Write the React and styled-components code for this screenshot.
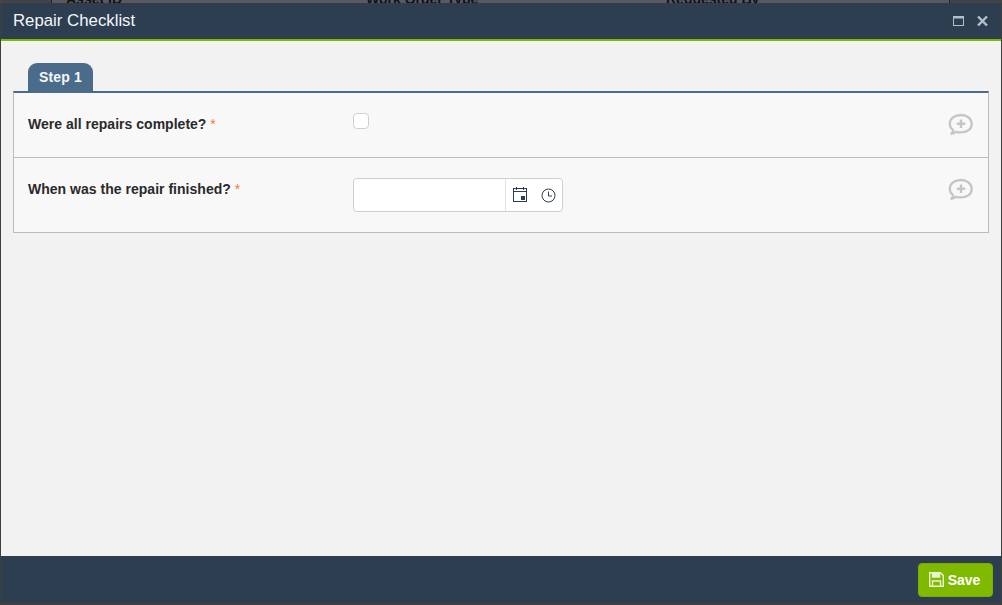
import styled, { createGlobalStyle } from 'styled-components'

const GlobalStyle = createGlobalStyle`
  html, body {
    margin: 0;
    padding: 0;
    height: 100%;
    background: #3a3a3a;
    font-family: "Liberation Sans", Arial, sans-serif;
  }
`
const Page = styled.div`
  position: relative;
  width: 1002px;
  height: 605px;
  overflow: hidden;
  background: #3f3f3f;
`
const BehindRow = styled.div`
  display: flex;
  height: 3px;
  overflow: hidden;
  align-items: flex-end;
  color: #111;
  font-size: 14px;
  font-weight: bold;
  line-height: 7px;
`
const BehindGutter = styled.div`
  width: ${(p) => p.$width}px;
  flex: none;
  height: 3px;
  background: #444;
`
const BehindTable = styled.div`
  width: 899px;
  flex: none;
  display: flex;
  align-items: flex-end;
  height: 3px;
  box-sizing: border-box;
  border-left: 1px solid #222;
  border-right: 1px solid #222;
  background: #5a5a5a;
`
const BehindCell = styled.span`
  width: ${(p) => p.$width}px;
  flex: none;
  padding-left: ${(p) => p.$pad || 0}px;
  box-sizing: border-box;
  white-space: nowrap;
`
const Modal = styled.div`
  position: absolute;
  left: 1px;
  top: 3px;
  width: 1000px;
  height: 600px;
  display: flex;
  flex-direction: column;
  background: #f2f2f2;
`
const TitleBar = styled.div`
  height: 36px;
  flex: none;
  display: flex;
  align-items: center;
  justify-content: space-between;
  padding: 0 13px 0 12px;
  background: #2c3e50;
  border-bottom: 2px solid #7fba00;
`
const Title = styled.h1`
  margin: 0;
  color: #f4f7f9;
  font-size: 16.8px;
  font-weight: normal;
`
const WindowButtons = styled.div`
  display: flex;
  align-items: center;
  gap: 13px;
  color: #b4bfc9;
`
const Content = styled.div`
  flex: 1;
  padding: 22px 12px 0;
`
const Tab = styled.div`
  display: inline-block;
  margin-left: 15px;
  height: 28px;
  line-height: 29px;
  width: 65px;
  text-align: center;
  box-sizing: border-box;
  border-radius: 9px 9px 0 0;
  background: #4a6b8a;
  color: #f5f7f9;
  font-size: 14px;
  font-weight: bold;
  letter-spacing: 0.2px;
  vertical-align: top;
`
const Panel = styled.div`
  width: 976px;
  box-sizing: border-box;
  border: 1px solid #bcbcbc;
  border-top: 2px solid #4a6b8a;
  background: #f8f8f8;
`
const Row = styled.div`
  display: flex;
  height: ${(p) => p.$height}px;
  box-sizing: border-box;
  padding: ${(p) => p.$top}px 14px 0 14px;
  & + & {
    border-top: 1px solid #bcbcbc;
  }
`
const Label = styled.label`
  width: 325px;
  flex: none;
  padding-top: ${(p) => p.$offset}px;
  color: #2a2a2a;
  font-size: 14px;
  font-weight: bold;
  line-height: 16px;
  letter-spacing: 0.02px;
`
const Required = styled.span`
  color: #f47b30;
  font-weight: normal;
`
const Field = styled.div`
  flex: 1;
`
const Checkbox = styled.span`
  display: block;
  width: 16px;
  height: 16px;
  margin-top: 2px;
  box-sizing: border-box;
  border: 1px solid #cfcfcf;
  border-radius: 4px;
  background: #fff;
`
const DateTime = styled.div`
  display: flex;
  width: 210px;
  height: 34px;
  box-sizing: border-box;
  border: 1px solid #cfcfcf;
  border-radius: 4px;
  background: #fff;
`
const DateInput = styled.input`
  width: 152px;
  flex: none;
  box-sizing: border-box;
  border: 0;
  border-right: 1px solid #e2e2e2;
  border-radius: 4px 0 0 4px;
  background: transparent;
  outline: none;
`
const PickerIcons = styled.div`
  flex: 1;
  display: flex;
  align-items: center;
  gap: 13px;
  padding-left: 7px;
`
const CommentButton = styled.div`
  flex: none;
  width: 26px;
  height: 22px;
  margin-top: ${(p) => p.$top}px;
  color: #c4c6c6;
`
const Footer = styled.div`
  height: 47px;
  flex: none;
  display: flex;
  align-items: center;
  justify-content: flex-end;
  padding-right: 8px;
  background: #2c3e50;
`
const SaveButton = styled.button`
  display: flex;
  align-items: center;
  justify-content: center;
  gap: 4px;
  width: 75px;
  height: 34px;
  padding: 0 2px 0 0;
  border: 1px solid #7aae00;
  border-radius: 4px;
  background: #7fba00;
  color: #fff;
  font-family: inherit;
  font-size: 14px;
  font-weight: bold;
`

const CommentIcon = () => (
  <svg width="26" height="22" viewBox="0 0 26 22" fill="none" stroke="currentColor">
    <path d="M3.500 20.800c1.800-.2 3.400-.9 4.500-2 1.200.4 2.800.6 4.500.6 6.800 0 11.200-3.400 11.200-8.500S19.300 2 13 2 1.800 5.500 1.800 10.900c0 2.600 1.100 4.600 3.300 6-.1 1.500-.6 2.800-1.600 3.900z" strokeWidth="2.300" strokeLinejoin="round" />
    <path d="M13 6.500v8.500M8.800 10.800h8.400" strokeWidth="2.400" />
  </svg>
)

const App = () => (
  <Page>
    <GlobalStyle />
    <BehindRow>
      <BehindGutter $width={51} />
      <BehindTable>
        <BehindCell $width={314} $pad={14}>Asset ID</BehindCell>
        <BehindCell $width={300}>Work Order Type</BehindCell>
        <BehindCell $width={280}>Requested By</BehindCell>
      </BehindTable>
      <BehindGutter $width={52} />
    </BehindRow>
    <Modal>
      <TitleBar>
        <Title>Repair Checklist</Title>
        <WindowButtons>
          <svg width="11" height="10" viewBox="0 0 11 10" fill="none" stroke="currentColor">
            <rect x="0.500" y="0.500" width="10" height="9" />
            <path d="M0 1.500h11" strokeWidth="2" />
          </svg>
          <svg width="11" height="10" viewBox="0 0 11 10" fill="none" stroke="currentColor" strokeWidth="2.400">
            <path d="M1 0.500l9 9M10 0.500l-9 9" />
          </svg>
        </WindowButtons>
      </TitleBar>
      <Content>
        <Tab>Step 1</Tab>
        <Panel>
          <Row $height={64} $top={18}>
            <Label $offset={5}>Were all repairs complete? <Required>*</Required></Label>
            <Field><Checkbox /></Field>
            <CommentButton $top={2}><CommentIcon /></CommentButton>
          </Row>
          <Row $height={75} $top={20}>
            <Label $offset={3}>When was the repair finished? <Required>*</Required></Label>
            <Field>
              <DateTime>
                <DateInput type="text" />
                <PickerIcons>
                  <svg width="15" height="16" viewBox="0 0 15 16" fill="none" stroke="#2c3e50">
                    <rect x="0.500" y="1.500" width="13" height="13" />
                    <path d="M0 4.500h14M3.500 0v3M10.500 0v3" />
                    <rect x="8" y="9" width="4" height="4" fill="#2c3e50" stroke="none" />
                  </svg>
                  <svg width="15" height="15" viewBox="0 0 15 15" fill="none" stroke="#2c3e50">
                    <circle cx="7.500" cy="7.500" r="6.500" />
                    <path d="M7.500 3.500V8H11" />
                  </svg>
                </PickerIcons>
              </DateTime>
            </Field>
            <CommentButton $top={0}><CommentIcon /></CommentButton>
          </Row>
        </Panel>
      </Content>
      <Footer>
        <SaveButton>
          <svg width="15" height="15" viewBox="0 0 15 15" fill="none" stroke="#eaf5cf" strokeWidth="1.400">
            <path d="M0.700 0.700H11.500L14.300 3.500V14.300H0.700z" />
            <path d="M3.500 1v4h7V1" fill="#eaf5cf" />
            <path d="M3.500 14v-5h8v5" />
          </svg>
          Save
        </SaveButton>
      </Footer>
    </Modal>
  </Page>
)

export default App
